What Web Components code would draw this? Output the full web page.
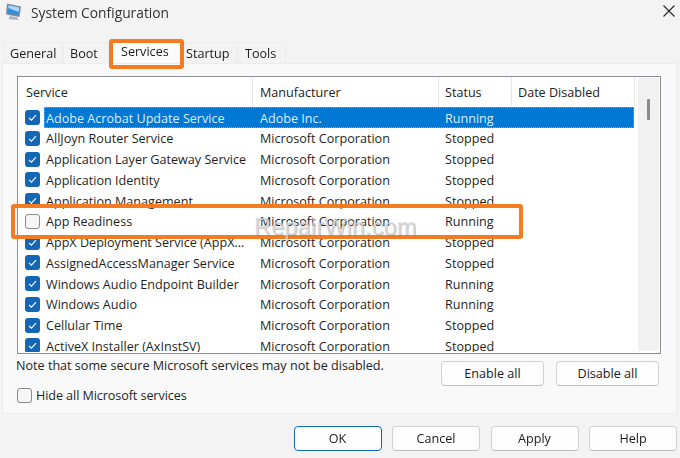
<!DOCTYPE html>
<html><head><meta charset="utf-8"><style>
html,body{margin:0;padding:0;background:#f3f3f3}
body{width:680px;height:458px;overflow:hidden;font-family:"Open Sans","Noto Sans",sans-serif;color:#1b1b1b}
</style></head><body>
<sys-dialog>
  <title-bar slot="title">System Configuration</title-bar>
  <tab-strip slot="tabs"></tab-strip>
  <services-panel slot="panel"></services-panel>
  <dialog-footer slot="footer"></dialog-footer>
</sys-dialog>
<script>
const FONT='"Open Sans","Noto Sans",sans-serif';
const FS='12.6px';
function def(name,html,setup){
  customElements.define(name,class extends HTMLElement{
    constructor(){super();this.attachShadow({mode:'open'}).innerHTML=html;}
    connectedCallback(){if(setup&&!this._d){this._d=1;setup(this);}}
  });
}
def('sys-dialog',`<style>
:host{display:block;position:relative;width:680px;height:458px;overflow:hidden;filter:blur(.3px)}
.w{display:flex;flex-direction:column;height:458px}
</style><div class="w"><slot name="title"></slot><slot name="tabs"></slot><slot name="panel"></slot><slot name="footer"></slot></div>`);

def('title-bar',`<style>
:host{display:flex;align-items:center;height:24px;padding:0 5px 0 5px;font:13.8px ${FONT};color:#333}
svg.i{width:19px;height:20px;margin-right:7px;flex:none}
.t{flex:1}
svg.x{width:12px;height:12px;flex:none;margin-bottom:2px}
</style>
<svg class="i" viewBox="0 0 19 20"><path d="M2 1.5 16 4.5 14.5 15 1 12.5Z" fill="#7f8a97"/><path d="M3.6 3.2 14.4 5.4 13.2 13.2 2.8 11.2Z" fill="#2f8fdc"/><path d="M3.6 3.2 14.4 5.4 13.6 10 3.2 6Z" fill="#a8d8f5"/><path d="M5 14 12 15.3 13.5 18 3.5 17Z" fill="#aab1ba"/></svg>
<span class="t"><slot></slot></span>
<svg class="x" viewBox="0 0 12 12"><path d="M.5.5 11.5 11.5M11.5.5.5 11.5" stroke="#222" stroke-width="1.1" fill="none"/></svg>`);

def('tab-item',`<style>
:host{display:flex;align-items:center;box-sizing:border-box;height:21px;padding-top:1px;background:#f3f3f3;border:1px solid #ececec;border-bottom:0;font:${FS} ${FONT};color:#1b1b1b}
:host([selected]){height:24px;background:#fbfbfb;padding-top:0;padding-bottom:1px;border-color:transparent}
</style><slot></slot>`);

def('tab-strip',`<style>
:host{display:flex;align-items:flex-end;height:39px;padding-left:4px;box-sizing:border-box;position:relative;z-index:1}
.m{position:absolute;left:109px;top:15px;width:75px;height:30px;box-sizing:border-box;border:4px solid #f47b20;border-radius:3px;pointer-events:none}
</style>
<tab-item style="width:58px;padding-left:5px">General</tab-item>
<tab-item style="width:46px;margin-left:1px;padding-left:6px">Boot</tab-item>
<tab-item selected style="width:68px;margin-left:4px;padding-left:7px">Services</tab-item>
<tab-item style="width:56px;padding-left:4px">Startup</tab-item>
<tab-item style="width:48px;margin-left:1px;padding-left:6px">Tools</tab-item>
<div class="m"></div>`);

def('check-box',`<style>
:host{display:block;box-sizing:border-box;width:15px;height:15px;border-radius:3px;flex:none;background:#f6f6f6;border:1.4px solid #8a8a8a}
:host([on]){background:#1467b5;border:0}
svg{display:none;width:15px;height:15px}
:host([on]) svg{display:block}
</style><svg viewBox="0 0 15 15"><path d="M4 7.8 6.4 10.2 11 5.2" stroke="#fff" stroke-width="1.1" fill="none"/></svg>`);

def('service-row',`<style>
:host{display:grid;grid-template-columns:7px 15px 5px 208px 185px 73px;align-items:center;height:20.75px;font:${FS} ${FONT};color:#1f1f1f;white-space:nowrap}
.n,.m,.s{overflow:hidden;padding-left:1px;padding-top:1px;position:relative}
.m{padding-left:7px}.s{padding-left:7px}
:host([sel]) .n,:host([sel]) .m,:host([sel]) .s{color:#dcedfb}
.bar{display:none}
:host([sel]) .bar{display:block;position:absolute;left:26px;width:590px;height:20.75px;box-sizing:border-box;background:#0078d4;border:1px dotted #d9925a}
</style><span></span><check-box></check-box><span></span><div class="bar"></div><span class="n"></span><span class="m"></span><span class="s"></span>`,el=>{
  const r=el.shadowRoot;
  r.querySelector('.n').textContent=el.getAttribute('n');
  r.querySelector('.m').textContent=el.getAttribute('m');
  r.querySelector('.s').textContent=el.getAttribute('s');
  if(!el.hasAttribute('off'))r.querySelector('check-box').setAttribute('on','');
});

const M='Microsoft Corporation';
const rows=[['Adobe Acrobat Update Service','Adobe Inc.','Running',1],
['AllJoyn Router Service',M,'Stopped'],['Application Layer Gateway Service',M,'Stopped'],['Application Identity',M,'Stopped'],['Application Management',M,'Stopped'],['App Readiness',M,'Running',0,1],['AppX Deployment Service (AppX…',M,'Stopped'],['AssignedAccessManager Service',M,'Stopped'],['Windows Audio Endpoint Builder',M,'Running'],['Windows Audio',M,'Running'],['Cellular Time',M,'Stopped'],['ActiveX Installer (AxInstSV)',M,'Stopped']];

def('service-list',`<style>
:host{display:flex;box-sizing:border-box;width:644px;height:278px;border:1px solid #8c8f93;border-bottom-width:1.5px;background:#fff;position:relative}
.main{flex:none;width:620px;overflow:hidden}
.hd{display:grid;grid-template-columns:235px 186px 73px 123px;height:30.3px;font:${FS} ${FONT};color:#222}
.hd span{display:flex;align-items:center;padding-left:8px;box-sizing:border-box;border-right:1px solid #e6e6e6}
.hd span:nth-child(2){padding-left:7px}
.hd span:nth-child(3),.hd span:nth-child(4){padding-left:6px}
.body{height:245.2px;overflow:hidden}
.sb{flex:none;width:21px;margin:1px 0 2px;background:#f1f1f1;position:relative}
.th{position:absolute;left:9px;top:21px;width:2.5px;height:21px;background:#8a8a8a;border-radius:1px}
</style>
<div class="main"><div class="hd"><span>Service</span><span>Manufacturer</span><span>Status</span><span>Date Disabled</span></div><div class="body"></div></div>
<div class="sb"><div class="th"></div></div>`,el=>{
  const b=el.shadowRoot.querySelector('.body');
  rows.forEach(r=>{const e=document.createElement('service-row');
    e.setAttribute('n',r[0]);e.setAttribute('m',r[1]);e.setAttribute('s',r[2]);
    if(r[3])e.setAttribute('sel','');if(r[4])e.setAttribute('off','');b.appendChild(e);});
});

def('push-button',`<style>
:host{display:flex;align-items:center;justify-content:center;box-sizing:border-box;height:25px;background:#fdfdfd;border:1.2px solid #d2d2d2;border-bottom-color:#bdbdbd;border-radius:4px;font:${FS} ${FONT};color:#1b1b1b}
:host([primary]){border-color:#0f6cbd}
</style><slot></slot>`);

def('services-panel',`<style>
:host{display:block;box-sizing:border-box;width:675px;height:351px;margin-left:2px;background:#f9f9f9;border:1px solid #ececec;padding:12px 0 0 14px;position:relative;font:${FS} ${FONT}}
.low{display:grid;grid-template-columns:412px 103px 103px;column-gap:12px;margin-top:7px;height:25px}
.low .note{margin:-4px 0 0 -1px;color:#1f1f1f;white-space:nowrap}
.hide{display:flex;align-items:center;gap:4px;margin-top:-1px;height:20px;color:#1f1f1f;letter-spacing:-.08px}
.hl{position:absolute;left:8px;top:140px;width:512px;height:35px;box-sizing:border-box;border:4px solid #f47b20;border-radius:3px}
.wm{position:absolute;left:251px;top:150px;font:23.6px "Liberation Sans",sans-serif;color:rgba(215,215,215,.8);text-shadow:1px 1px 0 rgba(120,120,120,.4);white-space:nowrap;letter-spacing:.1px}
</style>
<service-list></service-list>
<div class="low"><span class="note">Note that some secure Microsoft services may not be disabled.</span><push-button>Enable all</push-button><push-button>Disable all</push-button></div>
<div class="hide"><check-box></check-box><span>Hide all Microsoft services</span></div>
<div class="hl"></div><div class="wm">RepairWin.com</div>`);

def('dialog-footer',`<style>
:host{display:flex;justify-content:flex-end;gap:10.5px;padding:12px 3px 0 0;box-sizing:border-box;height:44px}
push-button{width:88px}
</style><push-button primary>OK</push-button><push-button>Cancel</push-button><push-button>Apply</push-button><push-button>Help</push-button>`);
</script></body></html>
